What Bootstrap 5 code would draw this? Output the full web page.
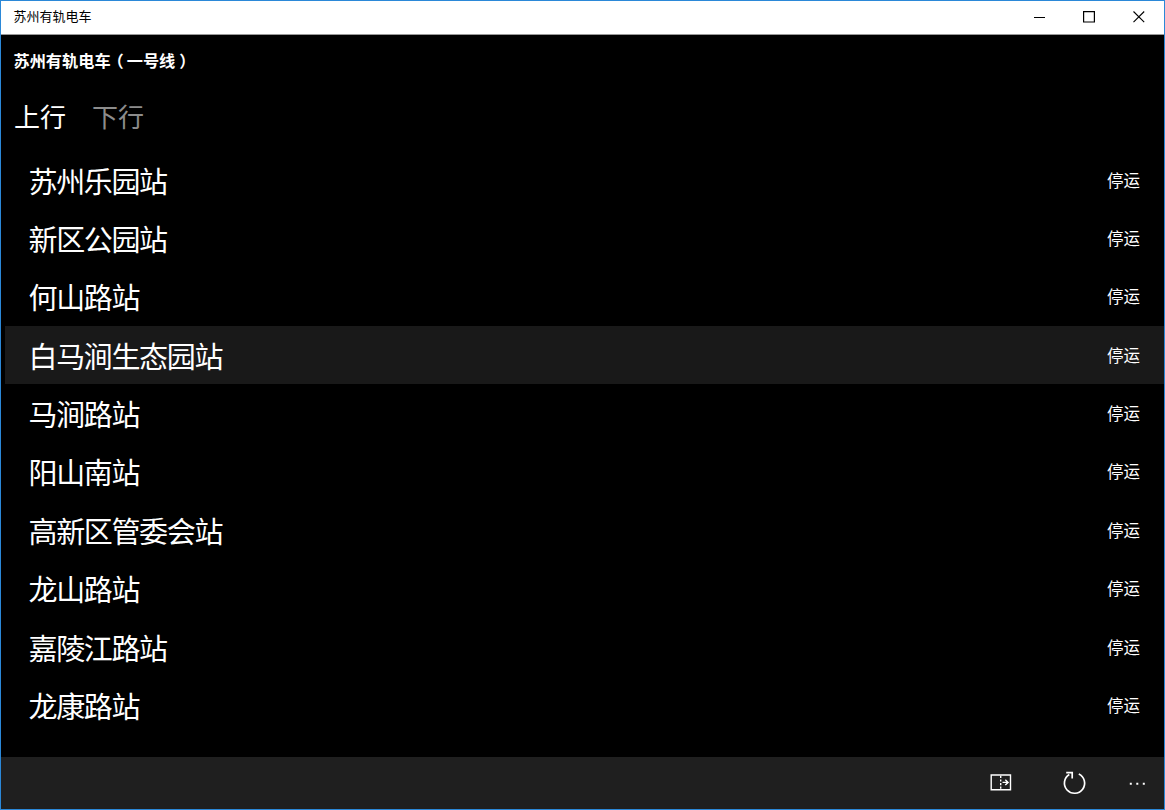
<!DOCTYPE html>
<html lang="zh-CN">

<head>
    <meta charset="utf-8">
    <title>苏州有轨电车</title>
    <link rel="stylesheet" href="https://cdn.jsdelivr.net/npm/bootstrap@5.3.3/dist/css/bootstrap.min.css" />
    <style>
        body {
            font-family: "Noto Sans CJK SC", sans-serif;
            overflow: hidden;
        }

        .app-window {
            height: 810px;
            border: 1px solid #2b88d8;
        }

        .title-bar {
            height: 34px;
            padding-left: 12.5px;
            font-size: 13px;
            border-bottom: 1px solid #999;
        }

        .app-title {
            padding-bottom: 3px;
        }

        .win-btn {
            width: 49.7px;
            height: 33px;
            padding-bottom: 1px;
        }

        .line-name {
            font-size: 16.2px;
            line-height: 24px;
            padding: 13px 12.5px 0;
        }

        .paren-open,
        .paren-close {
            font-feature-settings: "halt";
            margin: 0 3px 0 5px;
        }

        .paren-close {
            margin: 0 0 0 4px;
        }

        .direction-tabs {
            gap: 26px;
            padding: 24px 13px 0;
            height: 78.5px;
        }

        .direction-tabs .nav-link {
            font-size: 26px;
            line-height: 40px;
            color: #8c8c8c;
        }

        .direction-tabs .nav-link.active {
            color: #fff;
        }

        .station-list {
            margin-left: 4px;
        }

        .station {
            height: 58.4px;
            padding: 0 24px 0 23.5px;
        }

        .station.selected {
            background: #191919;
        }

        .station-name {
            font-size: 29px;
            letter-spacing: -1.35px;
            line-height: 58.4px;
        }

        .station-status {
            font-size: 16.5px;
            line-height: 59px;
        }

        .command-bar {
            height: 52px;
            background: #1f1f1f;
        }
    </style>
</head>

<body>
    <div class="app-window d-flex flex-column bg-black text-white">
        <!-- title bar -->
        <div class="title-bar d-flex align-items-center justify-content-between bg-white text-black flex-shrink-0">
            <span class="app-title">苏州有轨电车</span>
            <div class="d-flex">
                <div class="win-btn d-flex align-items-center justify-content-center">
                    <svg width="12" height="12" fill="none" stroke="#000"><path d="M0 6.5h11" /></svg>
                </div>
                <div class="win-btn d-flex align-items-center justify-content-center">
                    <svg width="12" height="12" fill="none" stroke="#000" stroke-width="1.2"><path d="M.6.6h10.8v10.4H.6z" /></svg>
                </div>
                <div class="win-btn d-flex align-items-center justify-content-center">
                    <svg width="12" height="12" fill="none" stroke="#000" stroke-width="1.1"><path d="M.5.5l10.7 10.7M11.2.5l-10.7 10.7" /></svg>
                </div>
            </div>
        </div>

        <h1 class="line-name fw-bold m-0">苏州有轨电车<span class="paren-open">（</span>一号线<span class="paren-close">）</span></h1>
        <nav class="direction-tabs nav">
            <a class="nav-link active p-0">上行</a>
            <a class="nav-link p-0">下行</a>
        </nav>

        <!-- stations -->
        <div class="station-list flex-grow-1" id="stations"></div>

        <!-- commands -->
        <div class="command-bar d-flex align-items-center justify-content-end flex-shrink-0">
            <svg width="174" height="52" fill="none" stroke="#fff" stroke-width="1.4">
                <path d="M1.2 18h19.3v14.7H1.2z" />
                <path d="M10.7 18.8v14" stroke-dasharray="2.2 1.4" />
                <path d="M12.5 25.4h5.5M15.3 22.7l2.8 2.7-2.8 2.7" />
                <path d="M88.8 17A10.1 10.1 0 1 1 79.300 17.5" stroke-width="1.7" />
                <path d="M76.2 15.7h6v5.9" stroke-width="1.7" />
                <path d="M139.8 26.8h2M146.3 26.8h2M152.8 26.8h2" stroke-width="2" />
            </svg>
        </div>
    </div>

    <script src="https://cdn.jsdelivr.net/npm/bootstrap@5.3.3/dist/js/bootstrap.bundle.min.js"></script>
    <script>
        const stations = ['苏州乐园站', '新区公园站', '何山路站', '白马涧生态园站', '马涧路站',
            '阳山南站', '高新区管委会站', '龙山路站', '嘉陵江路站', '龙康路站'];
        let str = ''
        stations.forEach((name, i) => {
            str += `
            <div class="station d-flex justify-content-between ${i === 3 ? 'selected' : ''}">
                <span class="station-name">${name}</span>
                <span class="station-status">停运</span>
            </div>`
        });
        document.getElementById('stations').innerHTML = str
    </script>
</body>

</html>
